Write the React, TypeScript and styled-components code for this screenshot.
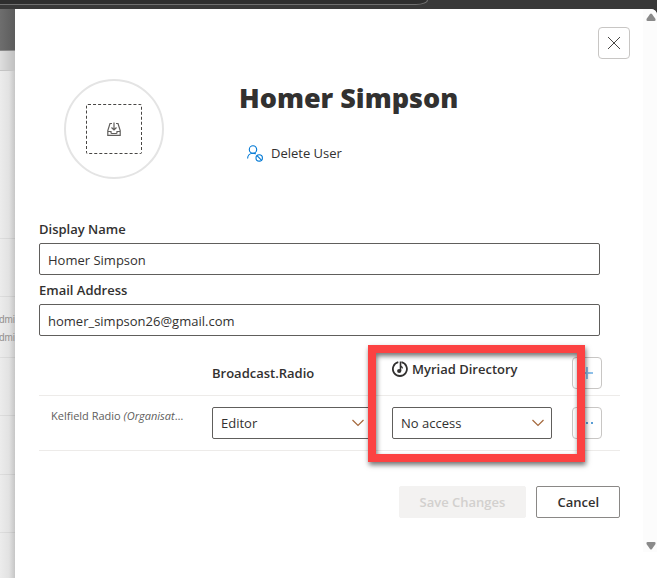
import React, { useState } from "react";
import styled, { createGlobalStyle } from "styled-components";

const ink = "#323130";
const line = "#edebe9";

const GlobalStyle = createGlobalStyle`
  *, *::before, *::after { box-sizing: border-box; }
  body {
    margin: 0;
    background: #3a3a3a;
    color: ${ink};
    font-family: "Open Sans", "Noto Sans", sans-serif;
    font-size: 13px;
    line-height: 20px;
  }
  button, input, select { font: inherit; color: inherit; margin: 0; }
`;

const Page = styled.div`
  display: flex;
  flex-direction: column;
  min-height: 100vh;
`;

const BrowserBar = styled.div`
  height: 9px;
  background: #393939;
  padding-right: 229px;
  overflow: hidden;
`;

const AddressBar = styled.div`
  height: 5px;
  background: #2e2e2e;
  border-bottom: 1px solid #707070;
  border-right: 1px solid #707070;
  border-bottom-right-radius: 12px 5px;
`;

const Stage = styled.div`
  flex: 1;
  display: grid;
  grid-template-columns: 15px minmax(0, 1fr);
`;

const Backdrop = styled.div`
  overflow: hidden;
  background: linear-gradient(to right, #ececec, #e2e2e2 60%, #c6c6c6);
`;

const BackdropHeader = styled.div`
  height: 42px;
  background: linear-gradient(to right, #6e6e6e, #5c5c5c);
  border-bottom: 1px solid #8a8a8a;
`;

const BackdropToolbar = styled.div`
  height: 20px;
  background: linear-gradient(to right, #dedede, #c0c0c0);
  border-bottom: 1px solid #c4c4c4;
`;

const BackdropRow = styled.div<{ $height?: number }>`
  height: ${(p) => p.$height ?? 59}px;
  padding-top: 14px;
  border-bottom: 1px solid rgba(0, 0, 0, 0.06);
  color: #92908e;
  font-family: "Liberation Sans", sans-serif;
  font-size: 10px;
  line-height: 18px;
  display: flex;
  flex-direction: column;
  align-items: flex-end;
  white-space: nowrap;
`;

const Panel = styled.main`
  display: flex;
  min-width: 0;
  background: #fff;
  border-top-right-radius: 6px;
`;

const PanelBody = styled.div`
  flex: 1;
  min-width: 0;
  padding: 18px 13px 24px 24px;
`;

const ScrollTrack = styled.div`
  width: 14px;
  height: 543px;
  padding: 4px 0 2px 2px;
  background: #fcfcfc;
  border-top-right-radius: 6px;
  display: flex;
  flex-direction: column;
  justify-content: space-between;
  align-items: center;
`;

const CloseRow = styled.div`
  display: flex;
  justify-content: flex-end;
`;

const SquareButton = styled.button<{ $narrow?: boolean }>`
  width: ${(p) => (p.$narrow ? 30 : 32)}px;
  height: 32px;
  padding: 0;
  display: flex;
  align-items: center;
  justify-content: center;
  background: #fff;
  border: 1px solid #c8c6c4;
  border-radius: 4px;
  cursor: pointer;
`;

const Profile = styled.header`
  display: flex;
  gap: 75px;
  margin: 20px 0 0 25px;
`;

const Avatar = styled.button`
  width: 100px;
  height: 100px;
  flex: none;
  padding: 0;
  display: flex;
  align-items: center;
  justify-content: center;
  background: #fff;
  border: 2px solid #e4e4e4;
  border-radius: 50%;
`;

const DropZone = styled.span`
  width: 56px;
  height: 50px;
  display: flex;
  align-items: center;
  justify-content: center;
  border: 1px dashed #484644;
  border-radius: 2px;
`;

const UserName = styled.h1`
  margin: 0;
  font-size: 27px;
  line-height: 38px;
  font-weight: 800;
`;

const DeleteButton = styled.button`
  display: flex;
  align-items: center;
  gap: 8px;
  margin: 26px 0 0 8px;
  padding: 0;
  border: 0;
  background: none;
  cursor: pointer;
`;

const Fields = styled.div`
  margin: 40px 30px 0 0;
`;

const Label = styled.label`
  display: block;
  height: 24px;
  line-height: 20px;
  font-weight: 600;
`;

const TextInput = styled.input`
  display: block;
  width: 100%;
  height: 32px;
  margin-bottom: 5px;
  padding: 2px 8px 0;
  border: 1px solid #605e5c;
  border-radius: 2px;
  background: #fff;
`;

const AccessSection = styled.section`
  position: relative;
  margin: 9px 10px 0 0;
`;

const AccessTable = styled.table`
  width: 100%;
  table-layout: fixed;
  border-collapse: collapse;
  tr { border-bottom: 1px solid ${line}; }
`;

const OrgCol = styled.col``;
const ServiceCol = styled.col`width: 180px;`;
const ActionCol = styled.col`width: 48px;`;

const HeadCell = styled.th`
  height: 50px;
  padding: 6px 0 0;
  text-align: left;
  font-weight: 600;
`;

const BodyCell = styled.td`
  height: 55px;
  padding: 0;
`;

const ServiceName = styled.span`
  display: flex;
  align-items: center;
  gap: 4px;
  padding-bottom: 8px;
`;

const OrgName = styled.div`
  padding: 0 28px 14px 12px;
  overflow: hidden;
  text-overflow: ellipsis;
  white-space: nowrap;
  color: #605e5c;
  font-size: 11px;
`;

const SelectBox = styled.div`
  position: relative;
  width: 160px;
`;

const Select = styled.select`
  appearance: none;
  display: block;
  width: 100%;
  height: 32px;
  padding: 0 28px 0 8px;
  border: 1px solid #605e5c;
  border-radius: 2px;
  background: #fff;
`;

const Chevron = styled.svg`
  position: absolute;
  right: 8px;
  top: 12px;
  pointer-events: none;
`;

const Highlight = styled.div`
  position: absolute;
  top: 0;
  right: 35px;
  width: 217px;
  height: 117px;
  border: 8px solid #fc4242;
  box-shadow: 1px 3px 5px rgba(0, 0, 0, 0.55), inset 1px 3px 5px rgba(0, 0, 0, 0.55);
  pointer-events: none;
`;

const Actions = styled.footer`
  display: flex;
  justify-content: flex-end;
  gap: 10px;
  margin: 35px 10px 0 0;
`;

const ActionButton = styled.button`
  height: 32px;
  padding: 0 20px;
  border: 1px solid #8a8886;
  border-radius: 2px;
  background: #fff;
  font-weight: 600;
  &:disabled {
    border-color: #f3f2f1;
    background: #f3f2f1;
    color: #d2d0ce;
  }
`;

function AccessSelect({ label, initial }: { label: string; initial: string }) {
  const [value, setValue] = useState(initial);
  return (
    <SelectBox>
      <Select aria-label={label} value={value} onChange={(e) => setValue(e.target.value)}>
        <option>No access</option>
        <option>Editor</option>
      </Select>
      <Chevron width="12" height="8" viewBox="0 0 12 8" fill="none" stroke="#a4683c" strokeWidth="1.2">
        <path d="M.5 1 6 6.500 11.500 1" />
      </Chevron>
    </SelectBox>
  );
}

export default function App() {
  const [name, setName] = useState("Homer Simpson");
  const [email, setEmail] = useState("homer_simpson26@gmail.com");
  return (
    <>
      <GlobalStyle />
      <Page>
        <BrowserBar>
          <AddressBar />
        </BrowserBar>
        <Stage>
          <Backdrop>
            <BackdropHeader />
            <BackdropToolbar />
            <BackdropRow $height={168} />
            <BackdropRow $height={58} />
            <BackdropRow $height={61}>
              <span>dmi</span>
              <span>dmi</span>
            </BackdropRow>
            <BackdropRow $height={58} />
            <BackdropRow />
            <BackdropRow $height={58} />
          </Backdrop>
          <Panel>
            <PanelBody>
              <CloseRow>
                <SquareButton aria-label="Close">
                  <svg width="14" height="14" viewBox="0 0 14 14" stroke="#484644" fill="none">
                    <path d="M1 1 13 13M13 1 1 13" />
                  </svg>
                </SquareButton>
              </CloseRow>
              <Profile>
                <Avatar aria-label="Upload picture">
                  <DropZone>
                    <svg width="14" height="14" viewBox="0 0 14 14" fill="none" stroke="#605e5c" strokeWidth="1.2">
                      <path d="M5 1.500H3L.8 8.500V13.300H13.200V8.500L11 1.500H9M.8 9.500H4V10.500Q4 11.500 5 11.500H9Q10 11.500 10 10.500V9.500H13.200" />
                      <path d="M7 .5V8M4.500 5.500 7 8 9.500 5.500" />
                    </svg>
                  </DropZone>
                </Avatar>
                <div>
                  <UserName>Homer Simpson</UserName>
                  <DeleteButton>
                    <svg width="16" height="17" viewBox="0 0 16 17" fill="none" stroke="#0078d4" strokeWidth="1.1">
                      <circle cx="6" cy="4.500" r="3.700" />
                      <path d="M.6 13.500C.6 10.300 3 8.200 6 8.200Q7.600 8.200 8.800 9" />
                      <circle cx="12.200" cy="12.900" r="3.200" />
                      <path d="M10 10.700 14.400 15.100" />
                    </svg>
                    Delete User
                  </DeleteButton>
                </div>
              </Profile>
              <Fields>
                <Label htmlFor="display-name">Display Name</Label>
                <TextInput id="display-name" value={name} onChange={(e) => setName(e.target.value)} />
                <Label htmlFor="email">Email Address</Label>
                <TextInput id="email" type="email" value={email} onChange={(e) => setEmail(e.target.value)} />
              </Fields>
              <AccessSection>
                <AccessTable>
                  <colgroup>
                    <OrgCol />
                    <ServiceCol />
                    <ServiceCol />
                    <ActionCol />
                  </colgroup>
                  <thead>
                    <tr>
                      <HeadCell />
                      <HeadCell scope="col">Broadcast.Radio</HeadCell>
                      <HeadCell scope="col">
                        <ServiceName>
                          <svg width="16" height="16" viewBox="0 0 16 16" fill="none" stroke={ink}>
                            <path d="M6.300 1.200A7 7 0 1 0 9.500 1.200" strokeWidth="1.800" />
                            <path d="M8.500 .5V10" strokeWidth="1.600" />
                            <path d="M8.500 3Q8.800 4.800 10.800 6V8Q10.300 6.800 8.500 6.300Z" fill={ink} stroke="none" />
                            <ellipse cx="7.200" cy="10" rx="2.100" ry="1.900" fill={ink} stroke="none" />
                          </svg>
                          Myriad Directory
                        </ServiceName>
                      </HeadCell>
                      <HeadCell>
                        <SquareButton $narrow aria-label="Add service">
                          <svg width="12" height="12" viewBox="0 0 12 12" stroke="#8fc1ea" strokeWidth="2">
                            <path d="M6 0V12M0 6H12" />
                          </svg>
                        </SquareButton>
                      </HeadCell>
                    </tr>
                  </thead>
                  <tbody>
                    <tr>
                      <BodyCell>
                        <OrgName>
                          Kelfield Radio <em>(Organisation)</em>
                        </OrgName>
                      </BodyCell>
                      <BodyCell>
                        <AccessSelect label="Broadcast.Radio access" initial="Editor" />
                      </BodyCell>
                      <BodyCell>
                        <AccessSelect label="Myriad Directory access" initial="No access" />
                      </BodyCell>
                      <BodyCell>
                        <SquareButton $narrow aria-label="More options">
                          <svg width="12" height="2" viewBox="0 0 12 2" fill="#5b9fd6">
                            <path d="M0 0h2v2H0zM5 0h2v2H5zM10 0h2v2h-2z" />
                          </svg>
                        </SquareButton>
                      </BodyCell>
                    </tr>
                  </tbody>
                </AccessTable>
                <Highlight />
              </AccessSection>
              <Actions>
                <ActionButton disabled>Save Changes</ActionButton>
                <ActionButton>Cancel</ActionButton>
              </Actions>
            </PanelBody>
            <ScrollTrack aria-hidden="true">
              <svg width="10" height="8" viewBox="0 0 10 8" fill="#8a8a8a">
                <path d="M4 1Q5 0 6 1L9.500 6Q10 8 8.500 8H1.500Q0 8 .5 6Z" />
              </svg>
              <svg width="10" height="8" viewBox="0 0 10 8" fill="#8a8a8a">
                <path d="M4 7Q5 8 6 7L9.500 2Q10 0 8.500 0H1.500Q0 0 .5 2Z" />
              </svg>
            </ScrollTrack>
          </Panel>
        </Stage>
      </Page>
    </>
  );
}
